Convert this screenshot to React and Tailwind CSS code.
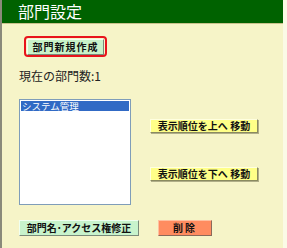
export default function App() {
  const font = { fontFamily: '"Noto Sans CJK JP", "Liberation Sans", sans-serif' };

  return (
    <div
      style={font}
      className="w-[287px] h-[248px] overflow-hidden bg-[#f6f4c8] border-l-2 border-[#8a8a7a] border-r-4 border-r-[#fbfae6] flex flex-col"
    >
      <div className="h-[24px] shrink-0 bg-[#006200] border-b border-[#c9c28c] text-white text-[16px] leading-[23px] pl-[16px]">
        部門設定
      </div>

      <div className="flex flex-col pl-[17px]">
        <div className="mt-[12px] ml-[5px] w-[83px] h-[21px] rounded-[4px] border-2 border-[#e8141c] flex items-center justify-center">
          <button className="w-[77px] h-[16px] bg-[#c9f3c9] border border-t-[#f2fff2] border-l-[#f2fff2] border-r-[#7a8a7a] border-b-[#7a8a7a] text-[10px] font-bold leading-[14px] text-[#111] tracking-[1px]">
            部門新規作成
          </button>
        </div>

        <div className="mt-[11px] text-[12px] leading-[16px] text-[#222]">
          現在の部門数:1
        </div>

        <div className="mt-[15px] flex">
          <div className="w-[112px] h-[106px] bg-white border border-[#7f9db9] p-[1px]">
            <div className="h-[10px] bg-[#316ac5] text-white text-[9.5px] leading-[10px] pl-[1px]">
              システム管理
            </div>
          </div>

          <div className="ml-[19px] flex flex-col">
            <button className="mt-[20px] w-[108px] h-[14px] bg-[#ffff88] border border-t-[#ffffe0] border-l-[#ffffe0] border-r-[#8a8a60] border-b-[#8a8a60] shadow-[1px_1px_0_#b0ae88] text-[10px] font-bold leading-[12px] text-[#111]">
              表示順位を上へ 移動
            </button>
            <button className="mt-[34px] w-[108px] h-[14px] bg-[#ffff88] border border-t-[#ffffe0] border-l-[#ffffe0] border-r-[#8a8a60] border-b-[#8a8a60] shadow-[1px_1px_0_#b0ae88] text-[10px] font-bold leading-[12px] text-[#111]">
              表示順位を下へ 移動
            </button>
          </div>
        </div>

        <div className="mt-[15px] flex">
          <button className="w-[120px] h-[16px] bg-[#c8f3cc] border border-t-[#f0fff0] border-l-[#f0fff0] border-r-[#7a8a7a] border-b-[#7a8a7a] text-[10px] font-bold leading-[14px] text-[#111]">
            部門名･アクセス権修正
          </button>
          <button className="ml-[19px] w-[54px] h-[16px] bg-[#ff8c60] border border-t-[#ffc0a0] border-l-[#ffc0a0] border-r-[#8a6a5a] border-b-[#8a6a5a] text-[10px] font-bold leading-[14px] text-[#111] tracking-[2px]">
            削除
          </button>
        </div>
      </div>
    </div>
  );
}
